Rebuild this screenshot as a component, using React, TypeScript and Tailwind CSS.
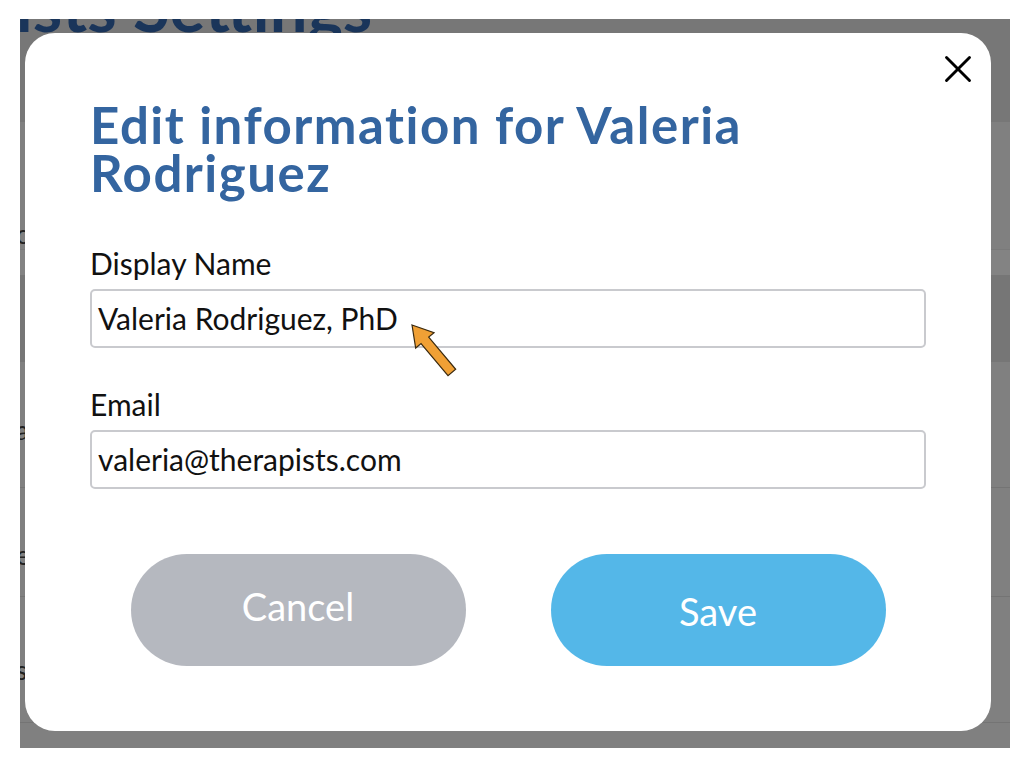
import React from 'react';
import { X } from 'lucide-react';

const font = { fontFamily: 'Lato, "Open Sans", sans-serif' };

function Field({ label, value, className = '' }: { label: string; value: string; className?: string }) {
  return (
    <div className={className}>
      <label className="block text-[30px] leading-[32px] text-[#111]">{label}</label>
      <div className="mt-[10px] h-[59px] rounded-[5px] border-2 border-[#c9cace] bg-white px-[6px] flex items-center">
        <span className="text-[30px] text-[#111]">{value}</span>
      </div>
    </div>
  );
}

export default function App() {
  return (
    <div className="w-[1024px] h-[776px] bg-white pt-[19px] pl-[20px]" style={font}>
      <div className="relative w-[990px] h-[729px] overflow-hidden bg-[#808080]">
        {/* page behind the overlay */}
        <div className="flex flex-col">
          <div className="h-[103px] bg-[#777777] relative">
            <h1 className="absolute left-[-214px] top-[-46px] text-[67px] leading-none font-bold text-[#1a355a] whitespace-nowrap">
              Therapists Settings
            </h1>
          </div>
          <div className="h-[128px] border-b border-[#7a7a7a]" />
          <div className="h-[25px] bg-[#838383]" />
          <div className="h-[87px] bg-[#767676]" />
          <div className="h-[126px] border-b border-[#747474]" />
          <div className="h-[109px] border-b border-[#747474]" />
          <div className="h-[126px] border-b border-[#747474]" />
        </div>
        <span className="absolute left-[-4px] top-[196px] text-[26px] text-[#222]">c</span>
        <span className="absolute left-[-4px] top-[392px] text-[26px] text-[#222]">a</span>
        <span className="absolute left-[-4px] top-[517px] text-[26px] text-[#222]">e</span>
        <span className="absolute left-[-4px] top-[632px] text-[26px] text-[#222]">s</span>

        {/* modal */}
        <div className="absolute left-[5px] top-[14px] w-[966px] h-[698px] rounded-[30px] bg-white px-[65px]">
          <button className="absolute left-[910px] top-[13px] text-black">
            <X className="w-[46px] h-[46px]" strokeWidth={1.5} />
          </button>
          <h2 className="pt-[68px] text-[51px] leading-[48px] tracking-[1.5px] font-bold text-[#3465a0] pr-[150px]">
            Edit information for Valeria Rodriguez
          </h2>
          <Field label="Display Name" value="Valeria Rodriguez, PhD" className="mt-[50px]" />
          <Field label="Email" value="valeria@therapists.com" className="mt-[40px]" />
          <div className="mt-[65px] flex justify-center gap-[85px]">
            <button className="w-[335px] h-[112px] rounded-full bg-[#b5b8bf] text-white text-[38px] pb-[8px]">
              Cancel
            </button>
            <button className="w-[335px] h-[112px] rounded-full bg-[#54b7e8] text-white text-[38px] pt-[2px]">
              Save
            </button>
          </div>
          <svg className="absolute left-[370px] top-[280px] w-[80px] h-[80px]" viewBox="0 0 80 80">
            <polygon
              points="0,0 12,20 5,20 5,62 -5,62 -5,20 -12,20"
              transform="translate(17,12) rotate(-40)"
              fill="#f0a035"
              stroke="#3a2a10"
              strokeWidth="1.2"
              strokeLinejoin="miter"
            />
          </svg>
        </div>
      </div>
    </div>
  );
}
